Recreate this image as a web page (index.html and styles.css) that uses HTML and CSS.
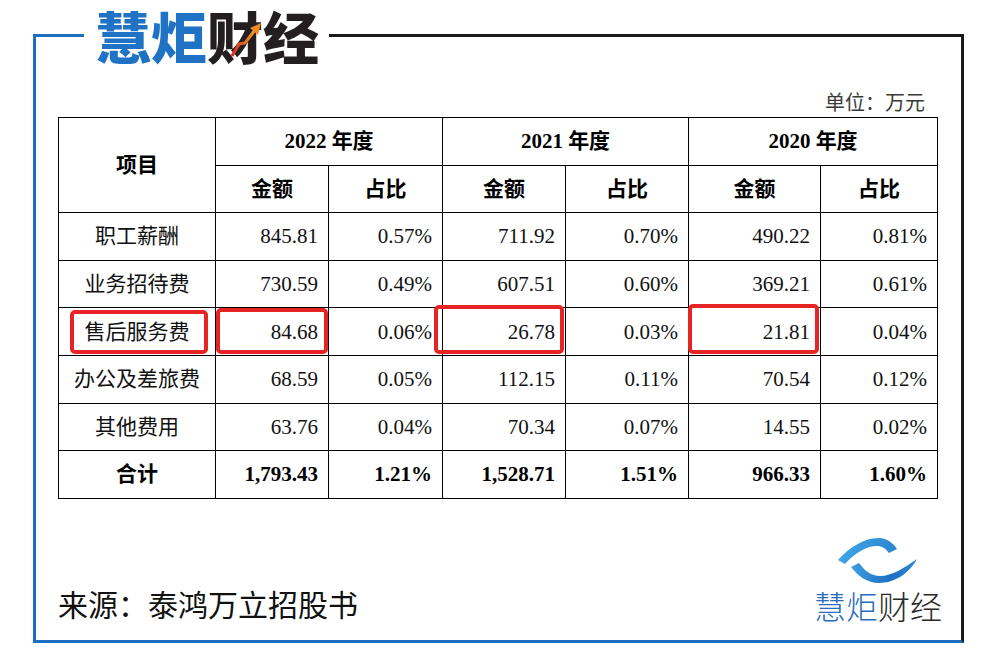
FILE: index.html
```html
<!DOCTYPE html>
<html lang="zh-CN">
<head>
<meta charset="utf-8">
<title>慧炬财经 - 销售费用</title>
<link rel="stylesheet" href="styles.css">
</head>
<body>
<div class="page">
  <div class="frame">
    <div class="masthead">
      <span class="rule rule-blue"></span>
      <div class="brand">
        <span class="b-blue">慧炬</span><span class="b-dark">财经</span>
        <svg class="brand-arrow" width="36" height="38" viewBox="0 0 36 38">
          <defs>
            <linearGradient id="ag" x1="0" y1="1" x2="1" y2="0">
              <stop offset="0" stop-color="#d8261c"/>
              <stop offset="1" stop-color="#f2a12a"/>
            </linearGradient>
          </defs>
          <polyline points="4,36 11,24 17,23 27,10" fill="none" stroke="url(#ag)" stroke-width="3" stroke-linejoin="round"/>
          <polygon points="33,3 22,8 30,15" fill="#f08a24"/>
        </svg>
      </div>
      <span class="rule rule-black"></span>
    </div>

    <div class="body">
      <div class="unit">单位：万元</div>
      <table class="fin">
        <colgroup>
          <col class="c-item"><col class="c-a1"><col class="c-p1"><col class="c-a2"><col class="c-p2"><col class="c-a3"><col class="c-p3">
        </colgroup>
        <thead>
          <tr>
            <th rowspan="2" class="lbl">项目</th>
            <th colspan="2">2022 年度</th>
            <th colspan="2">2021 年度</th>
            <th colspan="2">2020 年度</th>
          </tr>
          <tr>
            <th>金额</th><th>占比</th>
            <th>金额</th><th>占比</th>
            <th>金额</th><th>占比</th>
          </tr>
        </thead>
        <tbody>
          <tr>
            <td class="lbl">职工薪酬</td>
            <td>845.81</td><td>0.57%</td>
            <td>711.92</td><td>0.70%</td>
            <td>490.22</td><td>0.81%</td>
          </tr>
          <tr>
            <td class="lbl">业务招待费</td>
            <td>730.59</td><td>0.49%</td>
            <td>607.51</td><td>0.60%</td>
            <td>369.21</td><td>0.61%</td>
          </tr>
          <tr>
            <td class="lbl mark-cell">售后服务费<span class="hl hl-a"></span></td>
            <td class="mark-cell">84.68<span class="hl hl-b"></span></td><td>0.06%</td>
            <td class="mark-cell">26.78<span class="hl hl-c"></span></td><td>0.03%</td>
            <td class="mark-cell">21.81<span class="hl hl-d"></span></td><td>0.04%</td>
          </tr>
          <tr>
            <td class="lbl">办公及差旅费</td>
            <td>68.59</td><td>0.05%</td>
            <td>112.15</td><td>0.11%</td>
            <td>70.54</td><td>0.12%</td>
          </tr>
          <tr>
            <td class="lbl">其他费用</td>
            <td>63.76</td><td>0.04%</td>
            <td>70.34</td><td>0.07%</td>
            <td>14.55</td><td>0.02%</td>
          </tr>
          <tr class="total">
            <td class="lbl">合计</td>
            <td>1,793.43</td><td>1.21%</td>
            <td>1,528.71</td><td>1.51%</td>
            <td>966.33</td><td>1.60%</td>
          </tr>
        </tbody>
      </table>
    </div>

    <div class="footer">
      <div class="source">来源：泰鸿万立招股书</div>
      <div class="mark">
        <svg class="mark-icon" width="84" height="50" viewBox="0 0 84 50">
          <defs>
            <linearGradient id="tg" x1="0" y1="0" x2="1" y2="0">
              <stop offset="0" stop-color="#3fa6e6"/>
              <stop offset="1" stop-color="#2a86d2"/>
            </linearGradient>
            <linearGradient id="bg" x1="0" y1="0" x2="1" y2="0">
              <stop offset="0" stop-color="#3b9ee0"/>
              <stop offset="0.6" stop-color="#1f6fc2"/>
              <stop offset="1" stop-color="#2f8ad6"/>
            </linearGradient>
          </defs>
          <path d="M2 25 C14 12 28 3 43 3 C51 3 57 8 61 14 L53 18 C49 13 46 11 41 11 C30 11 19 18 9 29 Z" fill="url(#tg)"/>
          <path d="M15 32 L23 28 C29 36 35 41 44 41 C56 41 68 33 81 24 C74 37 60 48 43 48 C31 48 22 41 15 32 Z" fill="url(#bg)"/>
        </svg>
        <div class="mark-text"><span class="m-blue">慧炬</span><span class="m-dark">财经</span></div>
      </div>
    </div>
  </div>
</div>
</body>
</html>
```

FILE: styles.css
```css
html, body {
  margin: 0;
  padding: 0;
  background: #ffffff;
}

.page {
  width: 986px;
  height: 656px;
  box-sizing: border-box;
  padding: 34px 0 0 33px;
}

.frame {
  width: 931px;
  height: 609px;
  box-sizing: border-box;
  border-left: 3px solid #1d6fbf;
  border-bottom: 3px solid #1d6fbf;
  border-right: 3px solid #1a1a1a;
  display: flex;
  flex-direction: column;
}

/* masthead */
.masthead {
  display: flex;
  align-items: center;
  height: 62px;
  margin-top: -30px;
}

.rule {
  display: block;
  height: 3px;
}

.rule-blue {
  width: 48px;
  background: #1d6fbf;
}

.rule-black {
  flex: 1;
  background: #1a1a1a;
}

.brand {
  position: relative;
  margin: 0 10px 0 11px;
  font-family: "Noto Sans CJK SC", sans-serif;
  font-weight: 900;
  font-size: 56px;
  line-height: 62px;
  white-space: nowrap;
}

.b-blue {
  color: #1f72c4;
}

.b-dark {
  color: #231f20;
}

.brand-arrow {
  position: absolute;
  left: 133px;
  top: 16px;
}

/* body */
.body {
  padding: 0 24px 0 22px;
}

.unit {
  margin-top: 25px;
  height: 24px;
  line-height: 24px;
  font-family: "Liberation Serif", "Noto Sans CJK SC", serif;
  font-size: 20px;
  color: #3a3a3a;
  text-align: right;
  padding-right: 12px;
}

.fin {
  margin-top: 2px;
  width: 879px;
  border-collapse: collapse;
  table-layout: fixed;
  font-family: "Liberation Serif", "Noto Sans CJK SC", serif;
  font-size: 21px;
  color: #111;
}

.c-item { width: 157px; }
.c-a1 { width: 113px; }
.c-p1 { width: 114px; }
.c-a2 { width: 123px; }
.c-p2 { width: 123px; }
.c-a3 { width: 132px; }
.c-p3 { width: 117px; }

.fin th,
.fin td {
  border: 1px solid #000;
  height: 46.6px;
  padding: 0 10px;
  line-height: 24px;
  white-space: nowrap;
}

.fin th {
  font-weight: 700;
  text-align: center;
  color: #000;
}

.fin td {
  text-align: right;
  font-weight: 400;
}

.fin td.lbl {
  text-align: center;
}

.fin tr.total td {
  font-weight: 700;
  color: #000;
}

.mark-cell {
  position: relative;
}

.hl {
  position: absolute;
  border: 4px solid #e62424;
  border-radius: 5px;
  pointer-events: none;
}

.hl-a { left: 11px; right: 7px; top: 2px; bottom: 1px; }
.hl-b { left: 0; right: 0; top: 0; bottom: 1px; }
.hl-c { left: -9px; right: 1px; top: -3px; bottom: 1px; }
.hl-d { left: -1px; right: 1px; top: -4px; bottom: 1px; }

/* footer */
.footer {
  display: flex;
  justify-content: space-between;
  align-items: flex-end;
  margin-top: 36px;
  padding: 0 19px 0 22px;
}

.source {
  font-family: "Noto Sans CJK SC", sans-serif;
  font-size: 30px;
  line-height: 40px;
  color: #111;
}

.mark {
  display: flex;
  flex-direction: column;
  align-items: center;
}

.mark-icon {
  display: block;
}

.mark-text {
  margin-top: 2px;
  font-family: "Noto Sans CJK SC", sans-serif;
  font-weight: 300;
  font-size: 32px;
  line-height: 36px;
  white-space: nowrap;
}

.m-blue {
  color: #2a6cbc;
}

.m-dark {
  color: #2a2a2a;
}
```
